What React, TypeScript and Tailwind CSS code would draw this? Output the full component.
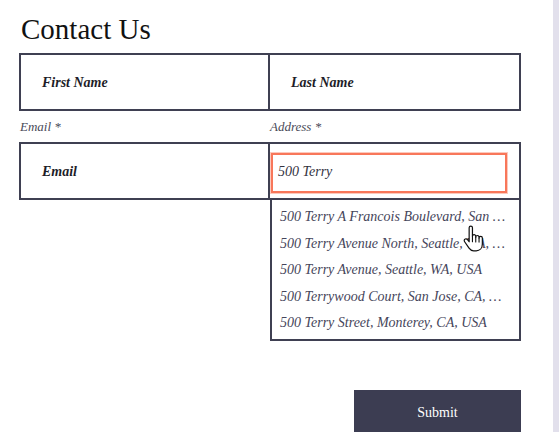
import React from 'react';

const suggestions = [
  '500 Terry A Francois Boulevard, San Francisco, CA, USA',
  '500 Terry Avenue North, Seattle, WA, USA',
  '500 Terry Avenue, Seattle, WA, USA',
  '500 Terrywood Court, San Jose, CA, USA',
  '500 Terry Street, Monterey, CA, USA',
];

function HandCursor() {
  return (
    <svg
      className="absolute left-[462px] top-[225px]"
      width="22"
      height="28"
      viewBox="0 0 20 25"
    >
      <path
        d="M6.5 2.2a1.5 1.5 0 0 1 3 0V10a1.5 1.5 0 0 1 3 0v0.8a1.5 1.5 0 0 1 3 0v0.9a1.5 1.5 0 0 1 3 0V17c0 3.6-2.3 6.2-5.6 6.2H10.6c-1.9 0-3.1-0.8-4.2-2.4L2.4 15c-0.7-1-0.4-2.1 0.5-2.5 0.8-0.4 1.7-0.1 2.3 0.7L6.5 15Z"
        fill="#fff"
        stroke="#111"
        strokeWidth="1.1"
        strokeLinejoin="round"
      />
      <path d="M9.5 10v5M12.5 10.8v4.4M15.5 11.7v3.6" stroke="#111" strokeWidth="1" strokeLinecap="round" />
    </svg>
  );
}

export default function App() {
  return (
    <div className="relative flex h-[432px] w-[559px] overflow-hidden bg-white font-['Liberation_Serif',serif]">
      <div className="min-w-0 flex-1 pl-[19px] pr-[32px] pt-[15px]">
        <h1 className="ml-[2px] mb-[9px] text-[29px] leading-[29px] text-[#111]">Contact Us</h1>

        {/* Name row */}
        <div className="flex h-[58px] border-2 border-[#3f4052]">
          <div className="flex w-[249px] items-center border-r-2 border-[#3f4052] pl-[21px] text-[14px] font-bold italic text-[#1d1d28]">
            First Name
          </div>
          <div className="flex min-w-0 flex-1 items-center pl-[21px] text-[14px] font-bold italic text-[#1d1d28]">
            Last Name
          </div>
        </div>

        {/* Labels */}
        <div className="flex h-[31px] items-center text-[13px] italic text-[#4a4a58]">
          <div className="w-[251px] pl-[1px]">Email *</div>
          <div className="min-w-0 flex-1">Address *</div>
        </div>

        {/* Email / Address row */}
        <div className="flex h-[58px] border-2 border-[#3f4052]">
          <div className="flex w-[249px] items-center border-r-2 border-[#3f4052] pl-[21px] text-[14px] font-bold italic text-[#1d1d28]">
            Email
          </div>
          <div className="flex min-w-0 flex-1 pl-[1px] pr-[12px] pt-[9px] pb-[5px]">
            <div className="flex flex-1 items-center border-2 border-[#f8775a] pb-[3px] pl-[5px] text-[14px] italic text-[#33333f] ring-1 ring-[#f8775a]/40">
              500 Terry
            </div>
          </div>
        </div>

        {/* Suggestions */}
        <div className="flex">
          <div className="w-[251px] shrink-0" />
          <ul className="min-w-0 flex-1 border-x-2 border-b-2 border-[#3f4052] pt-[4px] pb-[2px]">
            {suggestions.map((s) => (
              <li
                key={s}
                className="truncate pl-[8px] pr-[12px] text-[14px] leading-[26.5px] italic text-[#45455a]"
              >
                {s}
              </li>
            ))}
          </ul>
        </div>

        <div className="mt-[49px] flex justify-end">
          <button className="h-[46px] w-[167px] bg-[#3c3d52] text-[14px] text-white">Submit</button>
        </div>
      </div>
      <div className="w-[6px] shrink-0 bg-[#e2e0ec]" />
      <HandCursor />
    </div>
  );
}
